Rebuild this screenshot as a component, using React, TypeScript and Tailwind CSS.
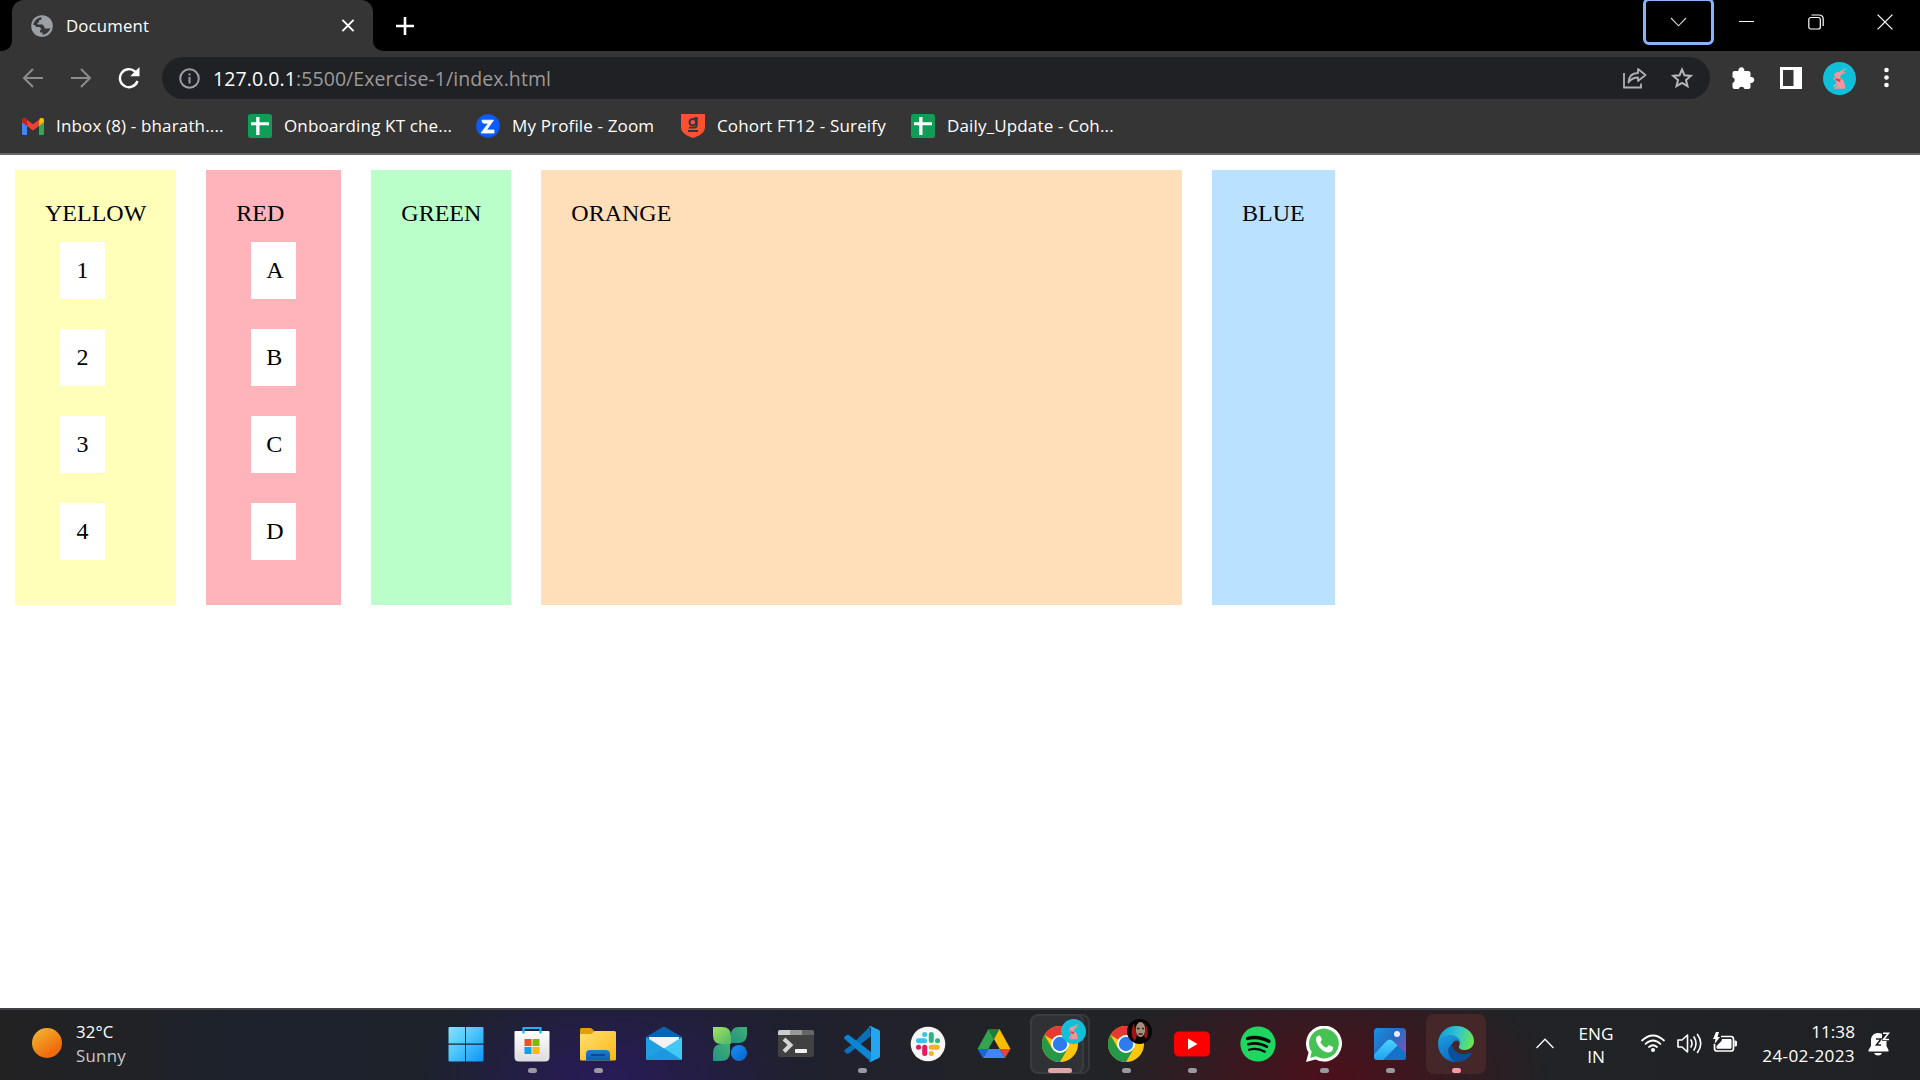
import React from 'react';

const uiFont = "font-['Open_Sans','Noto_Sans',sans-serif]";

function GlobeIcon() {
  return (
    <svg width="22" height="22" viewBox="0 0 22 22">
      <circle cx="11" cy="11" r="10.800" fill="#9aa0a6" />
      <path d="M2.300 10C3 5.500 6 3 10.500 2.300V4.500L8 5.500V7.500H6.500V9.500H11.500L13.500 12V13.500H17.500L19.300 13C18.300 17 15 19.500 11.500 19.800V17.500H9V15.500L10.500 14L8.500 12H5.500L3.500 10Z" fill="#35363a" />
    </svg>
  );
}

function GmailIcon() {
  return (
    <svg width="22" height="17" viewBox="0 0 22 17">
      <path d="M0 4V15.500Q0 17 1.500 17H5V7.500Z" fill="#4285f4" />
      <path d="M22 4V15.500Q22 17 20.500 17H17V7.500Z" fill="#34a853" />
      <path d="M17 2.500V8L22 4.200V2.500C22 0 19.500-.8 17.800.5Z" fill="#fbbc04" />
      <path d="M5 8V1.800L11 6.300L17 1.800V8L11 12.500Z" fill="#ea4335" />
      <path d="M0 2.500V4.200L5 8V1.800L4.200.5C2.500-.8 0 0 0 2.500Z" fill="#c5221f" />
    </svg>
  );
}

function SheetIcon() {
  return (
    <svg width="24" height="24" viewBox="0 0 24 24">
      <rect width="24" height="24" rx="2.500" fill="#0f9d58" />
      <path d="M3 8.200H21V11.200H11.500V21H8.200V11.200H3ZM8.200 3H11.500V9H8.200Z" fill="#fff" />
    </svg>
  );
}

function ZoomIcon() {
  return (
    <svg width="24" height="24" viewBox="0 0 24 24">
      <circle cx="12" cy="12" r="11.800" fill="#0b5cff" />
      <path d="M6 6.200H17.500L10.500 16H18V19H5L12.500 9.200H8Q6 9.200 6 6.200Z" fill="#fff" stroke="#fff" strokeWidth=".8" />
    </svg>
  );
}

function ShieldIcon() {
  return (
    <svg width="24" height="24" viewBox="0 0 24 24">
      <path d="M0 0H24V13C24 19 18 22 12 24C6 22 0 19 0 13Z" fill="#fc5130" />
      <circle cx="11.800" cy="8.300" r="3.300" fill="none" stroke="#33373d" strokeWidth="2" />
      <path d="M13 4.200H17M15.800 3.500V11Q15.800 13.700 13 13.700H8M7 17H17" fill="none" stroke="#33373d" strokeWidth="1.800" />
    </svg>
  );
}

function Rabbit({ size }: { size: number }) {
  return (
    <svg width={size} height={size} viewBox="0 0 33 33">
      <circle cx="16.500" cy="16.500" r="16.500" fill="#12bfd8" />
      <path d="M11 12.500Q12 9.800 16 10L22 6.500L23.500 6.500L19 10.300L23.500 10.200L18.500 12.700L17 14.500L18.500 16.500Q21.500 18.500 21.800 22.500Q22.800 24.500 21.500 26.800H11V25.600L14 24.800L13.500 23.800L10.500 25.200L10 24L13.500 21L12.500 18.500L10.500 17.500L11 15.800L13 15Q11 14.500 11 12.500Z" fill="#f3959d" />
      <path d="M12.500 16L16.500 17.200L17.800 15.800L17 20L12.500 18Z" fill="#d3414f" />
    </svg>
  );
}

const bookmarks: { label: string; icon: React.ReactNode; cls: string }[] = [
  { label: 'Inbox (8) - bharath....', icon: <GmailIcon />, cls: 'w-[226px]' },
  { label: 'Onboarding KT che...', icon: <SheetIcon />, cls: 'w-[228px]' },
  { label: 'My Profile - Zoom', icon: <ZoomIcon />, cls: 'w-[205px]' },
  { label: 'Cohort FT12 - Sureify', icon: <ShieldIcon />, cls: 'w-[230px]' },
  { label: 'Daily_Update - Coh...', icon: <SheetIcon />, cls: 'w-[230px]' },
];

function TabStrip() {
  return (
    <div className="flex h-[51px] bg-black">
      <div className="flex h-full w-3 items-end bg-[#353535]">
        <div className="h-full w-full rounded-br-[10px] bg-black" />
      </div>
      <div className="h-full w-[361px] bg-black">
        <div className="flex h-full items-center rounded-t-xl bg-[#353535] pl-[19px] pr-[18px]">
          <GlobeIcon />
          <span className="ml-[13px] flex-1 text-[16.8px] tracking-[0.15px] text-white">Document</span>
          <svg width="14" height="15" viewBox="0 0 15 15" stroke="#fff" strokeWidth="2.100">
            <path d="M1.500 1.500L13.500 13.500M13.500 1.500L1.500 13.500" />
          </svg>
        </div>
      </div>
      <div className="h-full w-3 bg-[#353535]">
        <div className="h-full w-full rounded-bl-[10px] bg-black" />
      </div>
      <div className="flex flex-1 items-center pl-[10px]">
        <svg width="20" height="20" viewBox="0 0 20 20" stroke="#fff" strokeWidth="2.600">
          <path d="M1 10H19M10 1V19" />
        </svg>
      </div>
      <div className="flex h-[45px] pr-px">
        <div className="-mt-[2px] mr-[-2px] flex h-[47px] w-[71px] items-center justify-center rounded-md border-[3px] border-[#8ab4f8]">
          <svg width="17" height="10" viewBox="0 0 17 10" fill="none" stroke="#ddd" strokeWidth="1.100">
            <path d="M1 1L8.500 8.800L16 1" />
          </svg>
        </div>
        <div className="flex w-[69px] items-center justify-center pb-[2px]">
          <div className="h-px w-[15px] bg-white" />
        </div>
        <div className="flex w-[69px] items-center justify-center pb-[2px]">
          <svg width="16" height="16" viewBox="0 0 16 16" fill="none" stroke="#fff" strokeWidth="1.200">
            <rect x=".8" y="3.500" width="11.500" height="11.500" rx="2" />
            <path d="M3.500 1H11Q15.200 1 15.200 5V12" />
          </svg>
        </div>
        <div className="flex w-[69px] items-center justify-center pb-[2px]">
          <svg width="16" height="16" viewBox="0 0 16 16" stroke="#fff" strokeWidth="1.300">
            <path d="M.6.6L15.400 15.400M15.400.6L.6 15.400" />
          </svg>
        </div>
      </div>
    </div>
  );
}

function Toolbar() {
  return (
    <div className="flex h-[54px] items-center">
      <div className="flex w-[162px] items-center pl-[22px]">
        <svg width="22" height="20" viewBox="0 0 22 20" fill="none" stroke="#8c8c8c" strokeWidth="2">
          <path d="M21 10H2.500M11 1L2 10L11 19" />
        </svg>
        <svg className="ml-[26px]" width="22" height="20" viewBox="0 0 22 20" fill="none" stroke="#8c8c8c" strokeWidth="2">
          <path d="M1 10H19.500M11 1L20 10L11 19" />
        </svg>
        <svg className="ml-[26px]" width="24" height="22" viewBox="0 0 24 22">
          <path d="M19.500 14A9 9 0 1 1 17 4.500L19.500 7" fill="none" stroke="#fff" strokeWidth="2.400" />
          <path d="M21.500 0V9.200H12.200Z" fill="#fff" />
        </svg>
      </div>
      <div className="flex h-[42px] w-[1548px] items-center rounded-full bg-[#202124] pl-[17px] pr-[16px]">
        <svg width="21" height="21" viewBox="0 0 21 21">
          <circle cx="10.500" cy="10.500" r="9.300" fill="none" stroke="#9aa0a6" strokeWidth="2" />
          <path d="M9.500 5.500H11.500V7.500H9.500ZM9.500 9H11.500V15.500H9.500Z" fill="#9aa0a6" />
        </svg>
        <span className="ml-[13px] flex-1 pt-px text-[19.500px] tracking-[0.08px] text-[#9a9a9a]">
          <span className="text-white">127.0.0.1</span>:5500/Exercise-1/index.html
        </span>
        <svg width="24" height="22" viewBox="0 0 24 22" fill="none" stroke="#aeb0b2" strokeWidth="1.800">
          <path d="M1 6V20.500H18V16.500" />
          <path d="M5.500 15.500Q6 6 15 6V2L22.500 8L15 14V10.500Q9 10.500 5.500 15.500Z" strokeLinejoin="round" />
        </svg>
        <svg className="ml-[24px] mr-px" width="22" height="22" viewBox="0 0 22 22" fill="none" stroke="#b4b6b8" strokeWidth="2">
          <path d="M11 2.500L13.500 8.300L19.800 8.900L15 13L16.500 19.200L11 15.900L5.500 19.200L7 13L2.200 8.900L8.500 8.300Z" />
        </svg>
      </div>
      <div className="flex flex-1 items-center">
        <svg className="ml-[22px]" width="23" height="23" viewBox="0 0 23 23" fill="#fff">
          <path d="M2.500 4H6.500A3 3 0 1 1 12.300 4H16Q18.500 4 18.500 6V10A3 3 0 1 1 18.500 15.800V20Q18.500 22 16.500 22H12.500A3 3 0 0 0 6.700 22H2.500Q.5 22 .5 20V16A3 3 0 0 0 .5 10.200V6Q.5 4 2.500 4Z" />
        </svg>
        <svg className="ml-[25px]" width="22" height="22" viewBox="0 0 22 22">
          <path fillRule="evenodd" d="M0 0H22V22H0ZM3 3V19H13.500V3Z" fill="#fff" />
        </svg>
        <div className="ml-[21px]"><Rabbit size={33} /></div>
        <svg className="ml-[28px]" width="5" height="22" viewBox="0 0 5 22" fill="#fff">
          <circle cx="2.500" cy="3" r="2.300" /><circle cx="2.500" cy="10.500" r="2.300" /><circle cx="2.500" cy="18" r="2.300" />
        </svg>
      </div>
    </div>
  );
}

function BookmarksBar() {
  return (
    <div className="flex h-[48px] items-center pb-[6px] pl-[22px]">
      {bookmarks.map((b) => (
        <div key={b.label} className={`flex shrink-0 items-center ${b.cls}`}>
          {b.icon}
          <span className="ml-3 whitespace-nowrap text-[17px] tracking-[0.15px] text-white">{b.label}</span>
        </div>
      ))}
    </div>
  );
}

function Column({ title, cls, items = [] }: { title: string; cls: string; items?: string[] }) {
  return (
    <div className={`m-[15px] h-[435px] p-[30px] ${cls}`}>
      <div className="h-[27px]">{title}</div>
      <div className="flex flex-col gap-[30px] p-[15px]">
        {items.map((i) => (
          <div key={i} className="flex h-[57px] w-[45px] items-center bg-white px-[15px]">
            <span className="min-w-full text-center">{i}</span>
          </div>
        ))}
      </div>
    </div>
  );
}

function PageContent() {
  return (
    <div className="flex h-[853px] items-start bg-white font-['Liberation_Serif',serif] text-[24px] leading-[27px] text-black">
      <Column title="YELLOW" cls="w-[161.300px] bg-[#ffffba]" items={['1', '2', '3', '4']} />
      <Column title="RED" cls="w-[135px] bg-[#ffb3ba]" items={['A', 'B', 'C', 'D']} />
      <Column title="GREEN" cls="w-[140px] bg-[#baffc9]" />
      <Column title="ORANGE" cls="w-[640.700px] bg-[#ffdfba]" />
      <Column title="BLUE" cls="w-[122.700px] bg-[#bae1ff]" />
    </div>
  );
}

function WindowsIcon() {
  return (
    <svg width="36" height="36" viewBox="0 0 36 36">
      <defs>
        <linearGradient id="win" gradientUnits="userSpaceOnUse" x1="0" y1="0" x2="36" y2="36"><stop stopColor="#8be1fb" /><stop offset=".45" stopColor="#4cc8fb" /><stop offset="1" stopColor="#0a92f7" /></linearGradient>
      </defs>
      <path d="M.5 2Q.5 1 1.500 1H17V17.500H.5ZM18 1H34.500Q35.500 1 35.500 2V17.500H18ZM.5 18.700H17V35.500H1.500Q.5 35.500 .5 34.500ZM18 18.700H35.500V34.500Q35.500 35.500 34.500 35.500H18Z" fill="url(#win)" />
    </svg>
  );
}

function StoreIcon() {
  return (
    <svg width="36" height="36" viewBox="0 0 36 36">
      <defs>
        <linearGradient id="bag" x1="0" y1="0" x2="0" y2="1"><stop stopColor="#fff" /><stop offset="1" stopColor="#dcdcde" /></linearGradient>
      </defs>
      <path d="M.5 6Q.5 5 1.500 5H34.500Q35.500 5 35.500 6V31Q35.500 35.500 31 35.500H5Q.5 35.500 .5 31Z" fill="url(#bag)" />
      <path d="M9.500 7.500V2H26.500V7.500" fill="none" stroke="#20b4ee" strokeWidth="2.200" />
      <path d="M10.500 13H17.500V20H10.500Z" fill="#f25022" /><path d="M18.500 13H25.500V20H18.500Z" fill="#7fba00" />
      <path d="M10.500 21H17.500V28H10.500Z" fill="#00a4ef" /><path d="M18.500 21H25.500V28H18.500Z" fill="#ffb900" />
    </svg>
  );
}

function FolderIcon() {
  return (
    <svg width="36" height="36" viewBox="0 0 36 36">
      <defs>
        <linearGradient id="fold" x1="0" y1="0" x2="1" y2="1"><stop stopColor="#ffdf75" /><stop offset="1" stopColor="#fbb80e" /></linearGradient>
        <linearGradient id="foldb" x1="0" y1="0" x2="0" y2="1"><stop stopColor="#1e7fd0" /><stop offset="1" stopColor="#0a60b3" /></linearGradient>
      </defs>
      <path d="M0 3.500Q0 2 1.500 2H11L15 5.500V12H0Z" fill="#e0a005" />
      <path d="M0 8H11L15 5H34.500Q36 5 36 6.500V33Q36 34.500 34.500 34.500H1.500Q0 34.500 0 33Z" fill="url(#fold)" />
      <path d="M6 34.500V28Q6 24 10 24H26Q30 24 30 28V34.500Z" fill="url(#foldb)" />
      <path d="M11 29H25" stroke="#0a3f85" strokeWidth="1.500" />
    </svg>
  );
}

function MailIcon() {
  return (
    <svg width="36" height="36" viewBox="0 0 36 36">
      <path d="M0 11L16.500 1Q18 .3 19.500 1L36 11V22H0Z" fill="#0863ad" />
      <path d="M3 11H33V20L18 28L3 20Z" fill="#f3f3f4" />
      <path d="M0 11L36 34H1.500Q0 34 0 32.500Z" fill="#209fe4" />
      <path d="M36 11V32.500Q36 34 34.500 34L17.500 22.700Z" fill="#41c9f4" />
      <path d="M18 22.500L36 34H1.500Q.5 34 0 33Z" fill="#1b98e0" />
    </svg>
  );
}

function ClipIcon() {
  return (
    <svg width="36" height="36" viewBox="0 0 36 36">
      <defs>
        <linearGradient id="clo" x1="0" y1="0" x2="1" y2="1"><stop stopColor="#a2e65b" /><stop offset="1" stopColor="#50b46d" /></linearGradient>
        <linearGradient id="clt" x1="0" y1="1" x2="1" y2="0"><stop stopColor="#249184" /><stop offset="1" stopColor="#40b173" /></linearGradient>
        <linearGradient id="clb" x1="0" y1="0" x2="1" y2="1"><stop stopColor="#1792f5" /><stop offset="1" stopColor="#0861c9" /></linearGradient>
      </defs>
      <path d="M19 17V9Q19 1 27 1H35V8Q35 17 26 17Z" fill="url(#clt)" />
      <path d="M1 35V27Q1 18 10 18H18V26Q18 35 9 35Z" fill="url(#clt)" />
      <path d="M1 1H10Q19 1 19 10V18H9Q1 18 1 9Z" fill="url(#clo)" />
      <circle cx="27" cy="27" r="8" fill="url(#clb)" />
    </svg>
  );
}

function TerminalIcon() {
  return (
    <svg width="36" height="36" viewBox="0 0 36 36">
      <rect y="4" width="36" height="27" rx="2" fill="#414141" />
      <path d="M0 9V6Q0 4 2 4H12V9Z" fill="#ccc" /><path d="M12 4H24V9H12Z" fill="#999" /><path d="M24 4H34Q36 4 36 6V9H24Z" fill="#666" />
      <path d="M6 13L12.500 19L6 25.500" fill="none" stroke="#d5d5d5" strokeWidth="4" />
      <rect x="17" y="23" width="12" height="4" rx=".8" fill="#f2f2f2" />
    </svg>
  );
}

function CodeIcon() {
  return (
    <svg width="36" height="36" viewBox="0 0 36 36">
      <path d="M26 .3L8 18.500L1.200 23.500Q-.5 24.700 1 26.200L3 27.700Q4 28 5.500 27L27 10Z" fill="#0a70b8" />
      <path d="M.8 10.500L3 9Q4 8.500 5.500 9.500L27 26V35.800L.6 13Q-.3 11.500 .8 10.500Z" fill="#0c86d1" />
      <path d="M25 .3L26.500 0L35 4Q36 4.500 36 6V30Q36 31.500 35 32L26.500 36L25 35.700L27 34V2Z" fill="#23a5f2" />
    </svg>
  );
}

function SlackIcon() {
  return (
    <svg width="36" height="36" viewBox="0 0 36 36">
      <circle cx="18" cy="18" r="17.300" fill="#f7f7f8" />
      <path d="M14.700 8.500H14.600M8.500 14.700H14.500" stroke="#36c5f0" strokeWidth="5" strokeLinecap="round" />
      <path d="M21.300 8.500V14.500M27.500 14.700H27.600" stroke="#2eb67d" strokeWidth="5" strokeLinecap="round" />
      <path d="M21.300 21.300H27.300M21.300 27.500H21.400" stroke="#ecb22e" strokeWidth="5" strokeLinecap="round" />
      <path d="M14.700 21.300V27.500M8.500 21.300H8.600" stroke="#e01e5a" strokeWidth="5" strokeLinecap="round" />
    </svg>
  );
}

function DriveIcon() {
  return (
    <svg width="36" height="36" viewBox="0 0 36 36">
      <path d="M1.500 23L12.500 3L18 13L12.300 23Z" fill="#34a350" />
      <path d="M12.500 3H23.500L18 13Z" fill="#188038" />
      <path d="M23.500 3L34.500 23H23.700L18 13Z" fill="#fbbc04" />
      <path d="M34.500 23L29 32L23.700 23Z" fill="#ea4335" />
      <path d="M12.300 23H23.700L29 32H7Z" fill="#4285f4" />
      <path d="M1.500 23H12.300L7 32Z" fill="#1967d2" />
    </svg>
  );
}

function ChromeIcon() {
  return (
    <svg width="36" height="36" viewBox="0 0 36 36">
      <circle cx="18" cy="18" r="18" fill="#ffc70a" />
      <path d="M18 18L2.400 9A18 18 0 0 1 33.600 9H18Z" fill="#e53a32" />
      <path d="M2.400 9A18 18 0 0 0 18 36L25.800 22.500L18 18L10.200 22.500Z" fill="#279847" />
      <circle cx="18" cy="18" r="9" fill="#fff" />
      <circle cx="18" cy="18" r="7.200" fill="#2e7bee" />
    </svg>
  );
}

function YoutubeIcon() {
  return (
    <svg width="36" height="36" viewBox="0 0 36 36">
      <rect y="5.500" width="36" height="25" rx="5" fill="#f00" />
      <path d="M14 12.500L23.500 18L14 23.500Z" fill="#fff" />
    </svg>
  );
}

function SpotifyIcon() {
  return (
    <svg width="36" height="36" viewBox="0 0 36 36" fill="none" stroke="#050a06" strokeLinecap="round">
      <circle cx="18" cy="18" r="17.600" fill="#1ed760" stroke="none" />
      <path d="M7.500 12.500Q18 9.500 29 15.300" strokeWidth="3.300" />
      <path d="M8.300 18.300Q18 15.500 26.800 20.700" strokeWidth="2.700" />
      <path d="M9 23.700Q17.500 21.500 24.800 25.700" strokeWidth="2.200" />
    </svg>
  );
}

function WhatsappIcon() {
  return (
    <svg width="36" height="36" viewBox="0 0 36 36">
      <path d="M0 36L2.500 26.800A18 18 0 1 1 9.500 33.500Z" fill="#fff" />
      <path d="M4.200 31.800L5.700 26A14.900 14.900 0 1 1 10.300 30.300Z" fill="#46c254" />
      <path d="M10 13Q10 10 13 9.500Q14 9.300 14.500 10.500L15.800 13.500Q16 14.300 14.300 16.200Q16.500 20.200 20.500 21.800L22.500 19.500Q23 19 24 19.500L27 21Q27.500 26 22.500 26.500Q18 26.500 13.500 21.500Q10 17.500 10 13Z" fill="#fff" />
    </svg>
  );
}

function PhotosIcon() {
  return (
    <svg width="36" height="36" viewBox="0 0 36 36">
      <defs>
        <linearGradient id="phs" x1="0" y1="0" x2="1" y2=".8"><stop stopColor="#1791df" /><stop offset=".5" stopColor="#246ec4" /><stop offset="1" stopColor="#8551b8" /></linearGradient>
        <linearGradient id="phm" x1="0" y1="0" x2="0" y2="1"><stop stopColor="#4cd2fb" /><stop offset="1" stopColor="#1b9df0" /></linearGradient>
        <clipPath id="phc"><rect x="2" y="2" width="32" height="32" rx="3.500" /></clipPath>
      </defs>
      <g clipPath="url(#phc)">
        <rect x="2" y="2" width="32" height="32" fill="url(#phs)" />
        <path d="M8 34L22 20Q24 18.500 26 20L34 27V34Z" fill="#1672c8" />
        <path d="M0 31L14.500 15Q18 12 21 15L25.500 19.500L9 36H0Z" fill="url(#phm)" />
      </g>
      <circle cx="25" cy="8" r="3" fill="#e8edf8" />
    </svg>
  );
}

function EdgeIcon() {
  return (
    <svg width="36" height="36" viewBox="0 0 36 36">
      <defs>
        <linearGradient id="edt" x1="0" y1=".4" x2="1" y2=".6"><stop stopColor="#159bd7" /><stop offset=".5" stopColor="#30c6d2" /><stop offset="1" stopColor="#6be74a" /></linearGradient>
        <linearGradient id="edb" x1="0" y1="0" x2=".6" y2="1"><stop stopColor="#1d9de0" /><stop offset="1" stopColor="#0a68bd" /></linearGradient>
      </defs>
      <path d="M0 17C1 6 9 0 18 0C29 0 36 7.500 36 15C36 20.500 32 24 27 24C23 24 20.500 22.500 21 20.500C23 17 21 13.500 17 13.500Z" fill="url(#edt)" />
      <path d="M0 17.500C2 10.500 8 8.500 13 9C19 9.500 23 14 22.500 18C22 14 16.500 12.500 14 18C11 25 19 32 28 28L33 27C30 33 24 36 18 36C8 36 0 28 0 17.500Z" fill="url(#edb)" />
      <path d="M14 18C8 22 9 32 18 36C25 36 30 33 33.500 28Q34 26.500 32.500 26.800C24 31 14.500 26 14 18Z" fill="#0c4f99" />
    </svg>
  );
}

function FaceBadge() {
  return (
    <svg width="25" height="25" viewBox="0 0 25 25">
      <circle cx="12.500" cy="12.500" r="12.500" fill="#050303" />
      <path d="M7 4Q3 12 5.500 19L8 22L10 16L8 10ZM17 3L19 9L17 17L19 20Q22 16 20 8Z" fill="#a01212" />
      <ellipse cx="13.500" cy="10.500" rx="4.800" ry="7.500" fill="#a48e7c" />
      <path d="M10 9.500H12.500M15 9.500H17M11.500 15H15.500" stroke="#30201c" strokeWidth="1.500" />
    </svg>
  );
}

type TaskApp = { name: string; icon: React.ReactNode; mark?: 'dot' | 'active' | 'alert'; badge?: React.ReactNode };

const apps: TaskApp[] = [
  { name: 'start', icon: <WindowsIcon /> },
  { name: 'store', icon: <StoreIcon />, mark: 'dot' },
  { name: 'files', icon: <FolderIcon />, mark: 'dot' },
  { name: 'mail', icon: <MailIcon /> },
  { name: 'clip', icon: <ClipIcon /> },
  { name: 'terminal', icon: <TerminalIcon /> },
  { name: 'code', icon: <CodeIcon />, mark: 'dot' },
  { name: 'slack', icon: <SlackIcon /> },
  { name: 'drive', icon: <DriveIcon /> },
  { name: 'chrome', icon: <ChromeIcon />, mark: 'active', badge: <Rabbit size={25} /> },
  { name: 'chrome-2', icon: <ChromeIcon />, mark: 'dot', badge: <FaceBadge /> },
  { name: 'youtube', icon: <YoutubeIcon />, mark: 'dot' },
  { name: 'spotify', icon: <SpotifyIcon /> },
  { name: 'whatsapp', icon: <WhatsappIcon />, mark: 'dot' },
  { name: 'photos', icon: <PhotosIcon />, mark: 'dot' },
  { name: 'edge', icon: <EdgeIcon />, mark: 'alert' },
];

const tileStyles = {
  none: '',
  dot: '',
  active: 'bg-[#303135] border-2 border-[#3b3c40]',
  alert: 'bg-[#452629]',
};

const markStyles = {
  none: 'w-[9px]',
  dot: 'w-[9px] bg-[#9b99a0]',
  active: 'w-6 bg-[#dfa6a8]',
  alert: 'w-[9px] bg-[#ff99a4]',
};

function TaskbarApp({ app }: { app: TaskApp }) {
  const mark = app.mark ?? 'none';
  return (
    <div className="relative flex w-[66px] shrink-0 justify-center">
      {mark === 'active' && (
        <div className="absolute left-[10px] top-0 h-[60px] w-[53px] rounded-lg border-2 border-[#36373b] bg-[#292a2d]" />
      )}
      <div className={`absolute top-0 h-[60px] rounded-lg ${mark === 'active' ? 'left-[3px] w-[54px]' : 'left-[3px] w-[60px]'} ${tileStyles[mark]}`} />
      <div className="relative mt-3 flex h-12 flex-col items-center">
        {app.icon}
        <div className={`mt-[6px] h-[5px] rounded-full ${markStyles[mark]}`} />
        {app.badge && <div className="absolute -top-[7px] left-[19px]">{app.badge}</div>}
      </div>
    </div>
  );
}

function Taskbar() {
  return (
    <div className="flex h-[72px] border-t-2 border-[#404145] bg-[radial-gradient(ellipse_190px_110px_at_605px_70px,#281b58,transparent),radial-gradient(ellipse_220px_110px_at_1330px_65px,#4c101b,transparent),linear-gradient(90deg,#222223_0px,#202226_150px,#1d222c_230px,#1d222b_450px,#1f2030_760px,#222326_1000px,#212326_1500px,#202124_1920px)] pt-1 text-[16.8px] leading-6 text-white">
      <div className="flex w-[433px] pl-8 pt-[6px]">
        <div className="mt-[8px] size-[30px] rounded-full bg-[linear-gradient(145deg,#f2bd34,#f06c0b_75%)]" />
        <div className="ml-[14px]">
          <div className="tracking-[0.15px]">32°C</div>
          <div className="tracking-[0.3px] text-[#c8c8c9]">Sunny</div>
        </div>
      </div>
      <div className="flex w-[1056px]">
        {apps.map((a) => <TaskbarApp key={a.name} app={a} />)}
      </div>
      <div className="flex flex-1">
        <svg className="ml-[47px] mt-[24px]" width="18" height="11" viewBox="0 0 18 11" fill="none" stroke="#fff" strokeWidth="1.300">
          <path d="M.5 10L9 1.300L17.500 10" />
        </svg>
        <div className="ml-[17px] mr-px mt-[8px] w-[50px] text-center text-[17.200px] leading-[23px]">ENG<br />IN</div>
        <svg className="ml-[19px] mt-[20px]" width="24" height="19" viewBox="0 0 24 19" fill="none" stroke="#fff" strokeWidth="1.700" strokeLinecap="round">
          <path d="M1 6.500Q12-3.500 23 6.500M4.500 10Q12 3 19.500 10M8 13Q12 9.500 16 13" />
          <circle cx="12" cy="16" r="2" fill="#fff" stroke="none" />
        </svg>
        <svg className="ml-[12px] mt-[19px]" width="25" height="21" viewBox="0 0 25 21" fill="none" stroke="#fff" strokeWidth="1.600" strokeLinecap="round" strokeLinejoin="round">
          <path d="M1 7H5L10.500 2V19L5 14H1ZM14 7Q16 10.500 14 14M17 4Q21 10.500 17 17M20.500 1.500Q27 10.500 20.500 19.500" />
        </svg>
        <svg className="ml-[10px] mt-[18px]" width="26" height="21" viewBox="0 0 26 21">
          <path d="M9 4.500H19Q21.500 4.500 21.500 7V16.500Q21.500 19 19 19H5Q2.500 19 2.500 16.500V12" fill="none" stroke="#fff" strokeWidth="1.700" />
          <path d="M10 7H18.500Q19.500 7 19.500 8V15.500Q19.500 16.800 18.500 16.800H5.500Q4.500 16.800 4.500 15.500V14L9.500 9ZM22.500 8.500H23.500Q25 8.500 25 10V13Q25 14.500 23.500 14.500H22.500ZM4 0L1 7H3.500L2.500 12L8 5H5.500L7 0Z" fill="#fff" />
        </svg>
        <div className="ml-[17px] mt-[6px] w-[100px] text-right text-[17.200px]">11:38<br /><span className="tracking-[0.3px]">24-02-2023</span></div>
        <svg className="ml-[13px] mt-[18px]" width="22" height="24" viewBox="0 0 22 24">
          <path d="M10 1C5 1 3 5 3 8V14L.5 18V19.500H20.500V18L18.500 14V9H14V1.700Q12 1 10 1ZM6 21H14Q13 23.500 10 23.500Q7 23.500 6 21Z" fill="#fff" />
          <path d="M8 7H13L8.500 13H13" fill="none" stroke="#202124" strokeWidth="1.600" />
          <path d="M15 1.200H20.500L15.500 7.500H21" fill="none" stroke="#fff" strokeWidth="1.600" />
        </svg>
      </div>
    </div>
  );
}

export default function App() {
  return (
    <div className={`flex h-[1080px] w-[1920px] flex-col overflow-hidden bg-white ${uiFont}`}>
      <div className="h-[155px] border-b-2 border-[#666] bg-[#353535]">
        <TabStrip />
        <Toolbar />
        <BookmarksBar />
      </div>
      <PageContent />
      <Taskbar />
    </div>
  );
}
